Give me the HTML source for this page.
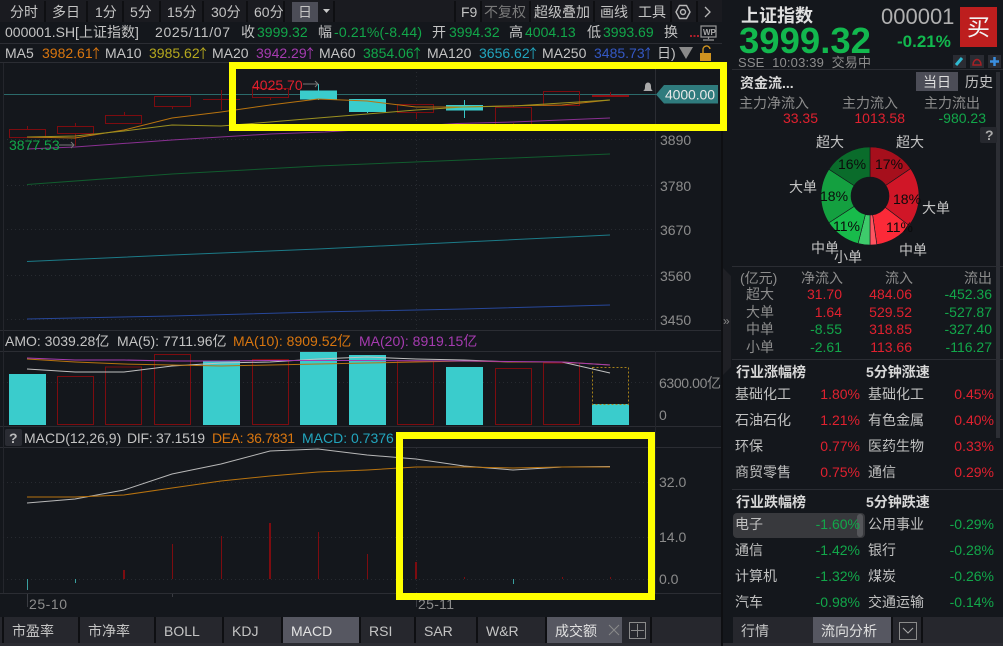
<!DOCTYPE html>
<html><head><meta charset="utf-8">
<style>
html,body{margin:0;padding:0;background:#14171c;width:1003px;height:646px;overflow:hidden}
svg{display:block;position:absolute;left:0;top:0}
text{font-family:"Liberation Sans","Noto Sans CJK SC",sans-serif;font-size:14px;fill:#c4c4c4;white-space:pre}
.g{fill:#12a74a}.r{fill:#e0212f}.d{fill:#8c8c8c}.w{fill:#c0c0c0}
.b{font-weight:bold;fill:#d8d8d8}
.k{fill:#0b0b0b;font-size:14px}
.ar{font-family:"Noto Sans CJK SC",sans-serif;font-size:13px}
.grid{stroke:#272a30;stroke-width:1;stroke-dasharray:1 3;fill:none}
.ln{fill:none;stroke-width:1}
.sep{stroke:#2b2d33;stroke-width:1}
.tb{stroke:#0e0f12;stroke-width:2}
.rb{fill:none;stroke:#7d0c10;stroke-width:1}
</style></head><body>
<svg width="1003" height="646" viewBox="0 0 1003 646" xmlns="http://www.w3.org/2000/svg">
<rect width="1003" height="646" fill="#14171c"/>
<!-- toolbar -->
<rect x="0" y="0" width="722" height="22" fill="#1a1b20"/>
<rect x="292" y="2" width="26" height="20" fill="#4c4d57"/>
<g class="tb">
<path d="M45 1V22M87 1V22M123 1V22M160 1V22M203 1V22M247 1V22M284 1V22M334 1V22M455 1V22M481 1V22M530 1V22M594 1V22M632 1V22M671 1V22M697 1V22"/>
</g>
<text x="10" y="17">分时</text><text x="52" y="17">多日</text><text x="95" y="17">1分</text><text x="130" y="17">5分</text><text x="167" y="17">15分</text><text x="211" y="17">30分</text><text x="254" y="17">60分</text><text x="298" y="17">日</text>
<path d="M323 9h7l-3.500 4z" fill="#c8c8c8"/>
<text x="461" y="17">F9</text><text x="484" y="17" style="fill:#7a7a7a">不复权</text><text x="534" y="17">超级叠加</text><text x="600" y="17">画线</text><text x="638" y="17">工具</text>
<path d="M679.500 5.500h7l3.500 6.500-3.500 6.500h-7L676 12z" fill="none" stroke="#b8b8b8" stroke-width="1.400" stroke-linejoin="round"/><circle cx="683" cy="12" r="2.500" fill="none" stroke="#b8b8b8" stroke-width="1.400"/>
<path d="M705 7l5 5-5 5" fill="none" stroke="#b8b8b8" stroke-width="1.300"/>
<!-- info rows -->
<path class="sep" d="M0 43.500H722M0 62.500H722"/>
<text x="5" y="37">000001.SH[上证指数]</text><text x="155" y="37" textLength="75">2025/11/07</text><text x="241" y="37">收</text><text class="g" x="257" y="37">3999.32</text><text x="318" y="37">幅</text><text class="g" x="334" y="37" textLength="88">-0.21%(-8.44)</text><text x="432" y="37">开</text><text class="g" x="449" y="37">3994.32</text><text x="509" y="37">高</text><text class="g" x="525" y="37">4004.13</text><text x="587" y="37">低</text><text class="g" x="603" y="37">3993.69</text><text x="664" y="37">换</text>
<path d="M690 36h2M693.500 36h2M697 36h2" stroke="#e0212f" stroke-width="1.500"/>
<rect x="701" y="26" width="15" height="11" fill="none" stroke="#999" stroke-width="1.200"/><text x="703" y="35" style="font-size:8px;font-weight:bold;fill:#aaa">WP</text><path d="M708.500 37v2M703 40h11" stroke="#999" stroke-width="1.200"/>
<text x="5" y="58">MA5</text><text x="42" y="58" style="fill:#d9760f">3982.61<tspan class="ar" dx="-3">↑</tspan></text><text x="105" y="58">MA10</text><text x="149" y="58" style="fill:#b5a81e">3985.62<tspan class="ar" dx="-3">↑</tspan></text><text x="212" y="58">MA20</text><text x="256" y="58" style="fill:#a63bb0">3942.29<tspan class="ar" dx="-3">↑</tspan></text><text x="319" y="58">MA60</text><text x="363" y="58" class="g">3854.06<tspan class="ar" dx="-3">↑</tspan></text><text x="427" y="58">MA120</text><text x="479" y="58" style="fill:#22a5bd">3656.62<tspan class="ar" dx="-3">↑</tspan></text><text x="542" y="58">MA250</text><text x="594" y="58" style="fill:#3458c4">3485.73<tspan class="ar" dx="-3">↑</tspan></text><text x="657" y="58">日)</text>
<rect x="650" y="45" width="7" height="17" fill="#14171c"/>
<rect x="677" y="45" width="45" height="17" fill="#14171c"/>
<path d="M679 47h14l-7 12z" fill="#8a8a8a"/>
<rect x="700" y="53" width="11" height="8" fill="#d09420"/><path d="M703 53v-3a3.500 3.500 0 0 1 7-1" fill="none" stroke="#d09420" stroke-width="1.400"/>
<!-- main chart grid -->
<path class="grid" d="M3 139.500H655M3 185.500H655M3 229.500H655M3 275.500H655M3 319.500H655M416.500 64V330"/>
<path d="M655.500 63V331M0 330.500H722" stroke="#2b2d33" fill="none"/>
<path d="M3 94.500H656" stroke="#2b6a6a" fill="none"/>
<!-- candles -->
<g>
<path d="M27.500 129v-3M75.500 126v-3M75.500 133v13M124.500 115v-3M172.500 106v3M221.500 90v20M203 99.500H240M270.500 97v3M416.500 112v7M513.500 107v-2M513.500 123v2M610.500 95v-3" stroke="#7d0c10" fill="none"/>
<rect class="rb" x="9.500" y="129.500" width="36" height="8"/>
<rect class="rb" x="57.500" y="126.500" width="36" height="7"/>
<rect class="rb" x="105.500" y="115.500" width="36" height="8"/>
<rect class="rb" x="154.500" y="96.500" width="36" height="10"/>
<rect class="rb" x="252.500" y="88.500" width="36" height="9"/>
<rect class="rb" x="397.500" y="104.500" width="36" height="8"/>
<rect class="rb" x="495.500" y="107.500" width="36" height="20"/>
<rect class="rb" x="543.500" y="91.500" width="36" height="14"/>
<rect x="592" y="95" width="37" height="2" fill="#8f0d12"/>
<path d="M318.500 84v16M367.500 99v14M464.500 100v18" stroke="#38c8c8" fill="none"/>
<rect x="300" y="90.500" width="37" height="9" fill="#3acccc"/>
<rect x="349" y="99" width="37" height="13" fill="#3acccc"/>
<rect x="446" y="105" width="37" height="5.500" fill="#3acccc"/>
</g>
<!-- MA lines -->
<polyline class="ln" stroke="#b8730f" points="27,137 75,138 124,130 172,118 221,112 270,105 318,99 367,101 416,107 464,107 503,106 562,105 610,100"/>
<polyline class="ln" stroke="#9c9120" points="27,137 75,136 124,131 172,125 221,126 270,122 318,118 367,114 416,110 464,107 513,106 562,103 610,100"/>
<polyline class="ln" stroke="#8a3092" points="27,149 75,147 172,140 270,134 325,132 457,123.500 513,122 610,118"/>
<polyline class="ln" stroke="#115c2e" points="27,184.500 172,174 318,166 464,160 610,154"/>
<polyline class="ln" stroke="#1c7b88" points="27,261.500 172,255 318,249 464,242 610,235"/>
<polyline class="ln" stroke="#27479a" points="27,319 172,316 318,312 464,309 610,305"/>
<text x="9" y="150" class="g">3877.53</text><path d="M59 145h15M71 142l3 3-3 3" stroke="#777" fill="none"/>
<text x="252" y="90" class="r">4025.70</text><path d="M303 84h15M315 81l3 3-3 3" stroke="#777" fill="none"/>
<path d="M643 91c2-1 2-3 2-5a3 3.500 0 0 1 6 0c0 2 0 4 2 5z" fill="#aaa"/>
<path d="M656 94.500L664 85H718V103.500H664z" fill="#2f7b7d"/>
<text x="665" y="99.500" style="fill:#e8e8e8;font-size:14px" textLength="50">4000.00</text>
<text class="d" x="660" y="145">3890</text><text class="d" x="660" y="191">3780</text><text class="d" x="660" y="235">3670</text><text class="d" x="660" y="281">3560</text><text class="d" x="660" y="325">3450</text>
<!-- AMO -->
<path class="sep" d="M0 351.500H722M0 426.500H722M0 447.500H722M0 593.500H722"/>
<path d="M655.500 351V593M3.500 63V593" stroke="#24262c" fill="none"/>
<text x="5" y="346">AMO: 3039.28亿  MA(5): 7711.96亿</text><text x="233" y="346" style="fill:#d9760f">MA(10): 8909.52亿</text><text x="359" y="346" style="fill:#a63bb0">MA(20): 8919.15亿</text>
<path class="grid" d="M3 382.500H655"/>
<g fill="#3acccc">
<rect x="9" y="374" width="37" height="51"/><rect x="203" y="361" width="37" height="64"/><rect x="300" y="352" width="37" height="73"/><rect x="349" y="355" width="37" height="70"/><rect x="446" y="367" width="37" height="58"/><rect x="592" y="404" width="37" height="21"/>
</g>
<g>
<rect class="rb" x="57.500" y="376.500" width="36" height="48"/><rect class="rb" x="105.500" y="367" width="36" height="57.500"/><rect class="rb" x="154.500" y="354.500" width="36" height="70"/><rect class="rb" x="252.500" y="359.500" width="36" height="65"/><rect class="rb" x="397.500" y="361" width="36" height="63.500"/><rect class="rb" x="495.500" y="368.500" width="36" height="56"/><rect class="rb" x="543.500" y="363" width="36" height="61.500"/>
</g>
<rect x="592.500" y="367.500" width="36" height="37" fill="none" stroke="#a5801a" stroke-dasharray="2 2"/>
<polyline class="ln" stroke="#c0c0c0" points="27,369 75,372 124,372 172,366 221,363 270,362 318,359 367,357 416,359 464,360 513,362 562,362 610,373"/>
<polyline class="ln" stroke="#b8730f" points="27,359 75,362 124,364 172,365 221,366 270,365 318,364 367,363 416,362 464,361 513,362 562,362 610,365"/>
<polyline class="ln" stroke="#a63bb0" points="27,358 75,360 124,360 172,361 221,361 270,360.500 367,360.500 464,361 562,362 610,365"/>
<text class="d" x="659" y="388" textLength="62">6300.00亿</text><text class="d" x="659" y="420">0</text>
<!-- MACD -->
<rect x="5" y="429" width="17" height="17" rx="2" fill="#2a2c33"/><text x="9" y="443" style="font-weight:bold;fill:#bbb">?</text>
<text x="24" y="443">MACD(12,26,9)</text><text x="127" y="443" textLength="78">DIF: 37.1519</text><text x="212" y="443" style="fill:#d9760f" textLength="83">DEA: 36.7831</text><text x="302" y="443" style="fill:#22a5bd">MACD: 0.7376</text>
<path class="grid" d="M3 482.500H655M3 537.500H655M3 579.500H655M416.500 448V593"/>
<polyline class="ln" stroke="#b8b8b8" points="27,503 75,499 124,490 172,474 221,464 270,451 318,449 367,455 416,459 464,466 513,470 562,467 610,466.500"/>
<polyline class="ln" stroke="#b8730f" points="27,497 75,497 124,495 172,488 221,481 270,476 318,472 367,470 416,467 464,467 513,468 562,467 610,467"/>
<g stroke="#7d0c10" fill="none">
<path d="M124 570V579" stroke-width="2"/><path d="M172.500 544V579M221.500 536V579M318.500 532V579M367.500 554V579M464.500 577V579M562.500 577V579M610.500 577V579"/><path d="M270 523V579" stroke-width="2"/><path d="M416 562V579" stroke-width="2"/>
</g>
<path d="M27.500 579V590M75.500 579V583M513.500 579V584" stroke="#3aa0a0" fill="none"/>
<text class="d" x="659" y="487">32.0</text><text class="d" x="659" y="542">14.0</text><text class="d" x="659" y="584">0.0</text>
<path d="M27.500 594V607M172.500 594V597M416.500 594V607" stroke="#3a3c42" fill="none"/>
<text class="d" x="29" y="609" textLength="38">25-10</text><text class="d" x="418" y="609" textLength="36">25-11</text>
<!-- yellow boxes -->
<rect x="232.500" y="65.500" width="491" height="62" fill="none" stroke="#ffff00" stroke-width="7"/>
<rect x="399.500" y="435.500" width="252" height="161" fill="none" stroke="#ffff00" stroke-width="7"/>
<!-- bottom left tabs -->
<rect x="0" y="617" width="722" height="26" fill="#26272d"/>
<rect x="0" y="643" width="1003" height="3" fill="#2b2c32"/>
<rect x="283" y="617" width="77" height="26" fill="#565761"/><rect x="547" y="617" width="75" height="26" fill="#565761"/>
<path class="tb" d="M3 617V643M79 617V643M155 617V643M223 617V643M282 617V643M360 617V643M415 617V643M477 617V643M546 617V643M651 617V643"/>
<text x="12" y="636">市盈率</text><text x="88" y="636">市净率</text><text x="164" y="636">BOLL</text><text x="232" y="636">KDJ</text><text x="291" y="636" style="fill:#e4e4e4">MACD</text><text x="369" y="636">RSI</text><text x="424" y="636">SAR</text><text x="486" y="636">W&amp;R</text><text x="555" y="636" style="fill:#e0e0e0">成交额</text>
<path d="M609 625l10 10M619 625l-10 10" stroke="#8a8a8a" fill="none"/>
<rect x="629.500" y="622.500" width="16" height="16" fill="none" stroke="#8a8a8a"/><path d="M637.500 624V637M631 630.500H644" stroke="#8a8a8a" fill="none"/>
<!-- divider -->
<rect x="721" y="131" width="2" height="515" fill="#0e0f12"/>
<path d="M723 268l8 8V367l-8 8z" fill="#1f2025"/>
<text x="723" y="325" style="font-size:12px;fill:#888">»</text>
<!-- right header -->
<text x="741" y="22" style="font-size:18px;font-weight:bold;fill:#e0e0e0">上证指数</text>
<text x="739" y="53" style="font-size:36.500px;font-weight:bold;fill:#12b84e">3999.32</text>
<text x="738" y="67" class="d" style="font-size:13px" textLength="133">SSE  10:03:39  交易中</text>
<text x="881" y="24" style="font-size:22px;fill:#b0b0b0">000001</text>
<text x="897" y="47" style="font-size:17px;font-weight:bold;fill:#12b84e">-0.21%</text>
<rect x="960" y="7" width="37" height="40" fill="#bd1e1e"/>
<text x="967" y="35" style="font-size:23px;fill:#f2f2f2">买</text>
<rect x="953" y="55" width="13" height="13" fill="#2a2c33"/><path d="M956 65l6-7" stroke="#2fb9d0" stroke-width="3"/>
<rect x="970" y="55" width="14" height="13" fill="#2a2c33"/><path d="M973 65a4 5.500 0 1 1 8 0z" fill="none" stroke="#a82025" stroke-width="1.500"/>
<rect x="988" y="55" width="13" height="13" fill="#2a2c33"/><path d="M994.500 57v9M990 61.500h9" stroke="#3b8fe0" stroke-width="2.500"/>
<path class="sep" d="M732 69.500H1003"/>
<text x="740" y="88" class="b">资金流...</text>
<rect x="916" y="72" width="42" height="19" fill="#4c4d57"/>
<text x="923" y="87" style="fill:#ddd">当日</text><text x="965" y="87">历史</text>
<rect x="996" y="72" width="4" height="366" fill="#2c2e34"/>
<text class="d" x="739" y="108">主力净流入</text><text class="d" x="842" y="108">主力流入</text><text class="d" x="924" y="108">主力流出</text>
<text class="r" x="818" y="123" text-anchor="end">33.35</text><text class="r" x="905" y="123" text-anchor="end">1013.58</text><text class="g" x="986" y="123" text-anchor="end">-980.23</text>
<rect x="980" y="127" width="17" height="16" rx="2" fill="#26282e"/><text x="985" y="140" style="font-weight:bold;fill:#aaa">?</text>
<!-- donut -->
<g stroke="#14171c" stroke-width=".6">
<path fill="#a60f1c" d="M870 147A49 49 0 0 1 910.600 168.600L885.800 185.400A19 19 0 0 0 870 177Z"/>
<path fill="#d01627" d="M910.600 168.600A49 49 0 0 1 909.100 225.500L885.200 207.400A19 19 0 0 0 885.800 185.400Z"/>
<path fill="#fb2a38" d="M909.100 225.500A49 49 0 0 1 876.800 244.500L872.600 214.800A19 19 0 0 0 885.200 207.400Z"/>
<path fill="#ff5561" d="M876.800 244.500A49 49 0 0 1 870 245L870 215A19 19 0 0 0 872.600 214.800Z"/>
<path fill="#3ecb6b" d="M870 245A49 49 0 0 1 858.100 243.500L865.400 214.400A19 19 0 0 0 870 215Z"/>
<path fill="#18bb4b" d="M858.100 243.500A49 49 0 0 1 828.900 222.700L854.100 206.400A19 19 0 0 0 865.400 214.400Z"/>
<path fill="#14a040" d="M828.900 222.700A49 49 0 0 1 828.900 169.300L854.100 185.600A19 19 0 0 0 854.100 206.400Z"/>
<path fill="#0a6c2b" d="M828.900 169.300A49 49 0 0 1 870 147L870 177A19 19 0 0 0 854.100 185.600Z"/>
</g>
<text class="k" x="838" y="169">16%</text><text class="k" x="875" y="169">17%</text><text class="k" x="820" y="201">18%</text><text class="k" x="893" y="204">18%</text><text class="k" x="833" y="231">11%</text><text class="k" x="886" y="232">11%</text>
<text x="816" y="147">超大</text><text x="896" y="147">超大</text><text x="789" y="192">大单</text><text x="922" y="213">大单</text><text x="811" y="253">中单</text><text x="834" y="262">小单</text><text x="899" y="255">中单</text>
<!-- flow table -->
<path class="sep" d="M732 266.500H1003M732 359.500H1003M732 489.500H1003"/>
<text class="d" x="740" y="283">(亿元)</text><text class="d" x="843" y="283" text-anchor="end">净流入</text><text class="d" x="913" y="283" text-anchor="end">流入</text><text class="d" x="992" y="283" text-anchor="end">流出</text>
<text class="d" x="746" y="299">超大</text><text class="r" x="842" y="299" text-anchor="end">31.70</text><text class="r" x="912" y="299" text-anchor="end">484.06</text><text class="g" x="992" y="299" text-anchor="end">-452.36</text>
<text class="d" x="746" y="317">大单</text><text class="r" x="842" y="317" text-anchor="end">1.64</text><text class="r" x="912" y="317" text-anchor="end">529.52</text><text class="g" x="992" y="317" text-anchor="end">-527.87</text>
<text class="d" x="746" y="334">中单</text><text class="g" x="842" y="334" text-anchor="end">-8.55</text><text class="r" x="912" y="334" text-anchor="end">318.85</text><text class="g" x="992" y="334" text-anchor="end">-327.40</text>
<text class="d" x="746" y="352">小单</text><text class="g" x="842" y="352" text-anchor="end">-2.61</text><text class="r" x="912" y="352" text-anchor="end">113.66</text><text class="g" x="992" y="352" text-anchor="end">-116.27</text>
<!-- industries -->
<text class="b" x="736" y="377">行业涨幅榜</text><text class="b" x="866" y="377">5分钟涨速</text>
<text class="w" x="735" y="399">基础化工</text><text class="r" x="860" y="399" text-anchor="end">1.80%</text><text class="w" x="868" y="399">基础化工</text><text class="r" x="994" y="399" text-anchor="end">0.45%</text>
<text class="w" x="735" y="425">石油石化</text><text class="r" x="860" y="425" text-anchor="end">1.21%</text><text class="w" x="868" y="425">有色金属</text><text class="r" x="994" y="425" text-anchor="end">0.40%</text>
<text class="w" x="735" y="451">环保</text><text class="r" x="860" y="451" text-anchor="end">0.77%</text><text class="w" x="868" y="451">医药生物</text><text class="r" x="994" y="451" text-anchor="end">0.33%</text>
<text class="w" x="735" y="477">商贸零售</text><text class="r" x="860" y="477" text-anchor="end">0.75%</text><text class="w" x="868" y="477">通信</text><text class="r" x="994" y="477" text-anchor="end">0.29%</text>
<text class="b" x="736" y="507">行业跌幅榜</text><text class="b" x="866" y="507">5分钟跌速</text>
<rect x="733" y="513" width="132" height="25" rx="4" fill="#38393d"/><rect x="857" y="514" width="6" height="23" rx="3" fill="#55565a"/>
<text class="w" x="735" y="529">电子</text><text class="g" x="860" y="529" text-anchor="end">-1.60%</text><text class="w" x="868" y="529">公用事业</text><text class="g" x="994" y="529" text-anchor="end">-0.29%</text>
<text class="w" x="735" y="555">通信</text><text class="g" x="860" y="555" text-anchor="end">-1.42%</text><text class="w" x="868" y="555">银行</text><text class="g" x="994" y="555" text-anchor="end">-0.28%</text>
<text class="w" x="735" y="581">计算机</text><text class="g" x="860" y="581" text-anchor="end">-1.32%</text><text class="w" x="868" y="581">煤炭</text><text class="g" x="994" y="581" text-anchor="end">-0.26%</text>
<text class="w" x="735" y="607">汽车</text><text class="g" x="860" y="607" text-anchor="end">-0.98%</text><text class="w" x="868" y="607">交通运输</text><text class="g" x="994" y="607" text-anchor="end">-0.14%</text>
<!-- bottom right tabs -->
<rect x="733" y="617" width="270" height="26" fill="#26272d"/>
<rect x="813" y="617" width="79" height="26" fill="#565761"/>
<path class="tb" d="M892 617V643M922 617V643"/>
<text x="741" y="636">行情</text><text x="821" y="636" style="fill:#e0e0e0">流向分析</text>
<rect x="899.500" y="622.500" width="17" height="17" fill="none" stroke="#8a8a8a"/><path d="M903 628l5 5 5-5" fill="none" stroke="#aaa"/>
</svg>
</body></html>
